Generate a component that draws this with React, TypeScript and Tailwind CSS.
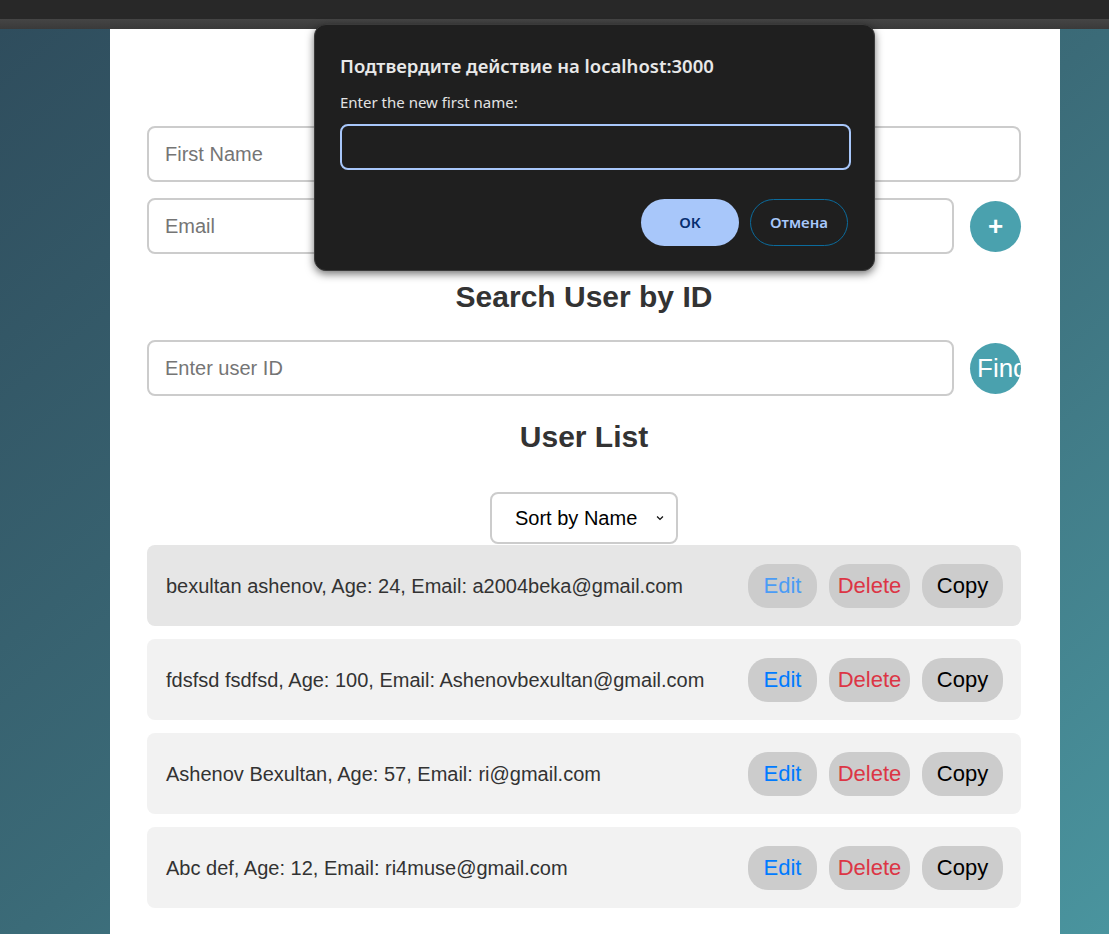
import React from 'react'

const users = [
  { text: 'bexultan ashenov, Age: 24, Email: a2004beka@gmail.com', hover: true },
  { text: 'fdsfsd fsdfsd, Age: 100, Email: Ashenovbexultan@gmail.com', hover: false },
  { text: 'Ashenov Bexultan, Age: 57, Email: ri@gmail.com', hover: false },
  { text: 'Abc def, Age: 12, Email: ri4muse@gmail.com', hover: false },
]

const inputCls =
  'h-[56px] w-full rounded-[8px] border-2 border-[#cccccc] bg-white px-4 text-[20px] text-[#333] placeholder-[#757575] outline-none'

export default function App() {
  return (
    <div className="relative min-h-screen overflow-hidden font-['Liberation_Sans',Arial,sans-serif]">
      {/* browser chrome strip */}
      <div className="h-[19px] bg-[#282828]" />
      <div className="h-[10px] bg-gradient-to-b from-[#454545] to-[#3a3a3a]" />

      <div className="flex min-h-[905px] bg-gradient-to-br from-[#2f4d5d] via-[#3b6b78] to-[#4a959f]">
        <div className="ml-[110px] w-[950px] bg-white pt-[38px] pr-[39px] pb-10 pl-[37px]">
          <h2 className="mb-[25px] text-center text-[30px] leading-[34px] font-bold text-[#333]">
            Add New User
          </h2>

          <div className="flex flex-col gap-4">
            <div className="flex gap-4">
              <input className={inputCls} placeholder="First Name" />
              <input className={inputCls} placeholder="Last Name" />
            </div>
            <div className="flex items-center gap-4">
              <input className={inputCls} placeholder="Email" />
              <input className={inputCls} placeholder="Age" />
              <button className="h-[51px] w-[51px] shrink-0 rounded-full bg-[#4aa1ae] text-[26px] leading-none font-bold text-white">
                +
              </button>
            </div>
          </div>

          <h2 className="mt-[26px] text-center text-[30px] leading-[34px] font-bold text-[#333]">
            Search User by ID
          </h2>
          <div className="mt-[26px] flex items-center gap-4">
            <input className={inputCls} placeholder="Enter user ID" />
            <button className="h-[51px] w-[51px] shrink-0 overflow-hidden rounded-full bg-[#4aa1ae] pl-[7px] text-left text-[26px] leading-none whitespace-nowrap text-white">
              Find
            </button>
          </div>

          <h2 className="mt-[24px] text-center text-[30px] leading-[34px] font-bold text-[#333]">
            User List
          </h2>

          <div className="mt-[38px] flex justify-center">
            <div className="flex h-[52px] w-[188px] items-center justify-between rounded-[8px] border-2 border-[#cccccc] bg-white pr-[11px] pl-[23px] text-[20px] text-black">
              <span>Sort by Name</span>
              <svg width="10" height="10" viewBox="0 0 12 12" fill="none">
                <path d="M2.5 4.2 6 7.7l3.5-3.5" stroke="#111" strokeWidth="1.6" />
              </svg>
            </div>
          </div>

          <ul className="mt-[1px] flex flex-col gap-[13px]">
            {users.map((u) => (
              <li
                key={u.text}
                className={
                  'flex h-[81px] items-center justify-between rounded-[8px] pr-[18px] pl-[19px] ' +
                  (u.hover ? 'bg-[#e6e6e6]' : 'bg-[#f2f2f2]')
                }
              >
                <span className="text-[20px] text-[#333]">{u.text}</span>
                <div className="flex gap-3">
                  <button
                    className={
                      'h-[44px] w-[69px] rounded-[20px] bg-[#cccccc] text-[22px] ' +
                      (u.hover ? 'text-[#4b9cf5]' : 'text-[#007bff]')
                    }
                  >
                    Edit
                  </button>
                  <button className="h-[44px] w-[81px] rounded-[20px] bg-[#cccccc] text-[22px] text-[#dc3545]">
                    Delete
                  </button>
                  <button className="h-[44px] w-[81px] rounded-[20px] bg-[#cccccc] text-[22px] text-black">
                    Copy
                  </button>
                </div>
              </li>
            ))}
          </ul>
        </div>
      </div>

      {/* prompt dialog */}
      <div className="absolute top-[24px] left-[314px] flex h-[247px] w-[561px] flex-col rounded-[12px] border border-[#3a3a3a] bg-[#1f1f1f] px-[25px] pt-[29px] font-['Noto_Sans','Open_Sans',sans-serif] shadow-[0_3px_8px_rgba(0,0,0,0.55)]">
        <div className="text-[18.5px] leading-[24px] font-semibold whitespace-nowrap text-[#e8e8e8]">
          Подтвердите действие на localhost:3000
        </div>
        <div className="mt-[14px] text-[15px] leading-[20px] text-[#e3e3e3]">Enter the new first name:</div>
        <div className="mt-[12px] h-[46px] w-[511px] shrink-0 rounded-[8px] border-2 border-[#a8c7fa] bg-[#1f1f1f]" />
        <div className="mt-[29px] flex justify-end gap-[11px] pr-[1px]">
          <button className="h-[47px] w-[98px] rounded-full bg-[#a8c7fa] text-[15px] font-semibold text-[#062e6f]">
            ОК
          </button>
          <button className="h-[47px] w-[98px] rounded-full border border-[#0b6b9c] text-[15px] font-semibold text-[#a8c7fa]">
            Отмена
          </button>
        </div>
      </div>
    </div>
  )
}
